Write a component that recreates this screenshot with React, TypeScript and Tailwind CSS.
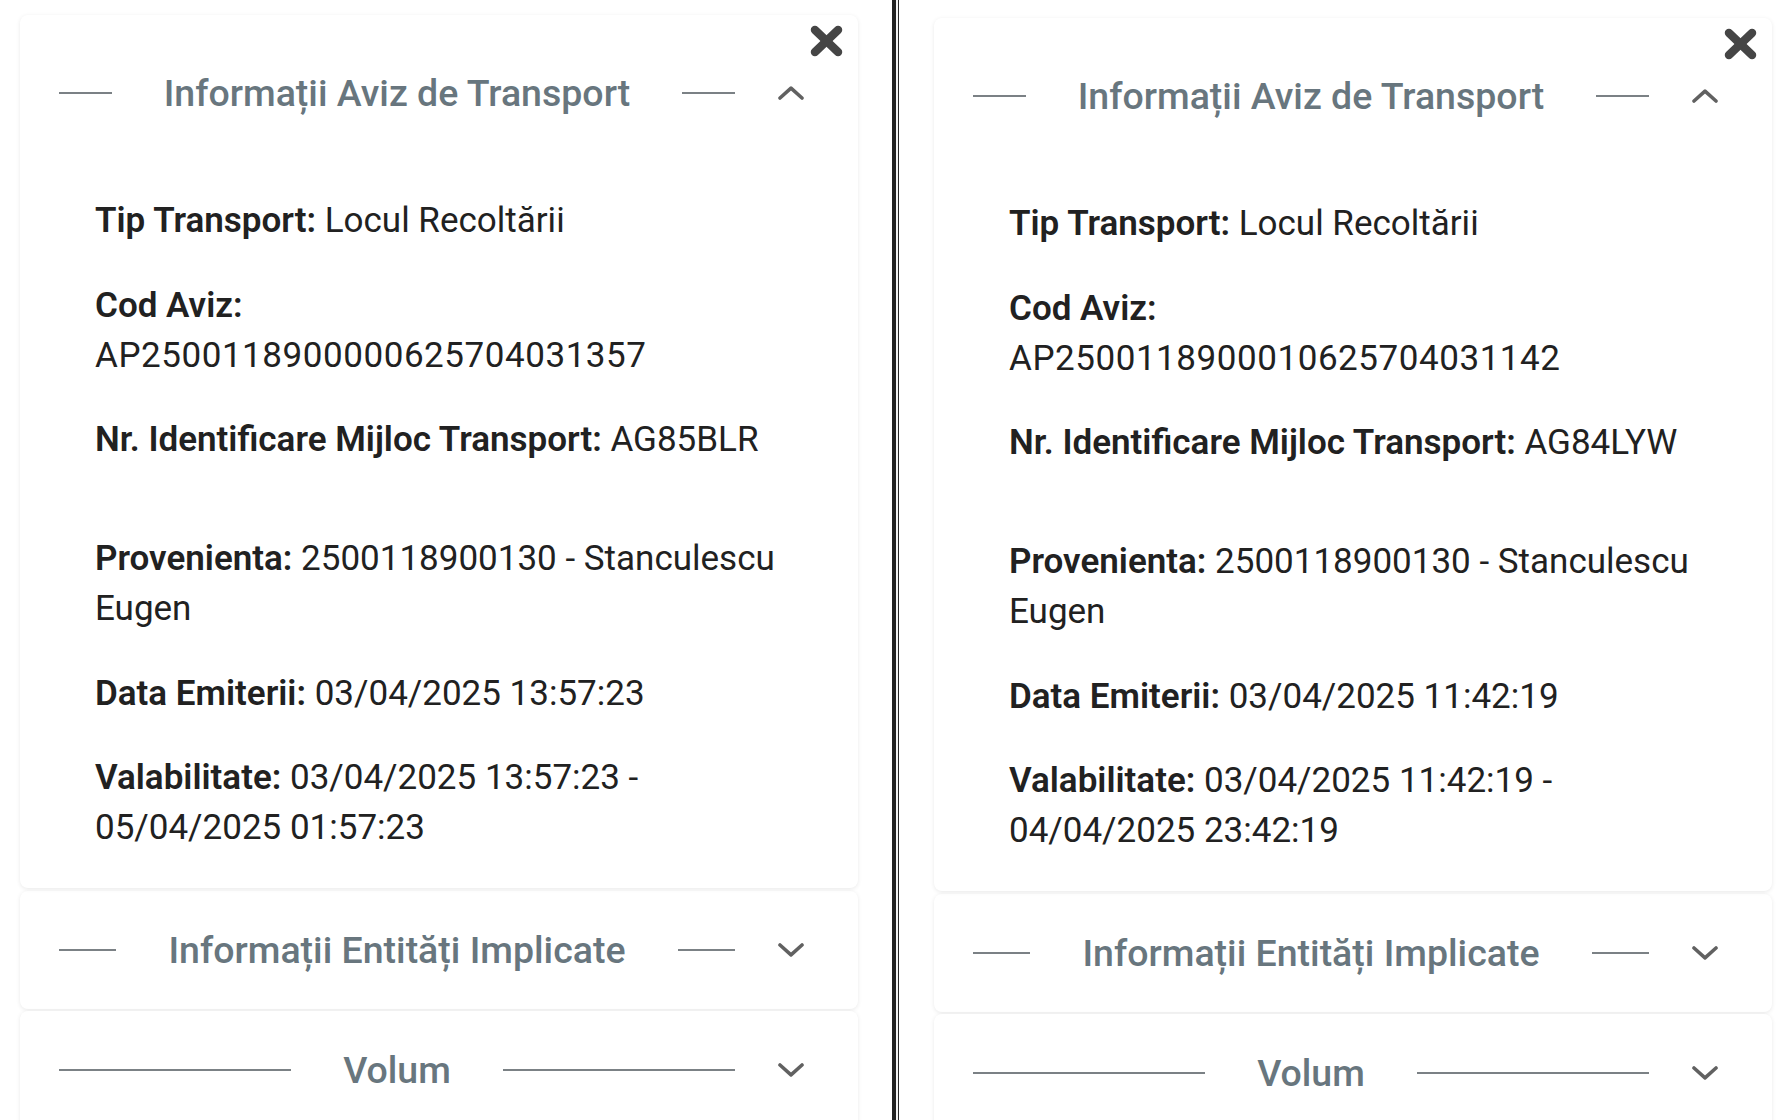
type Row = { label: string; value: string; breakAfterLabel?: boolean; spacerAfter?: boolean }

type PanelData = {
  rows: Row[]
}

const leftData: PanelData = {
  rows: [
    { label: "Tip Transport:", value: "Locul Recoltării" },
    { label: "Cod Aviz:", value: "AP2500118900000625704031357", breakAfterLabel: true },
    { label: "Nr. Identificare Mijloc Transport:", value: "AG85BLR", spacerAfter: true },
    { label: "Provenienta:", value: "2500118900130 - Stanculescu Eugen" },
    { label: "Data Emiterii:", value: "03/04/2025 13:57:23" },
    { label: "Valabilitate:", value: "03/04/2025 13:57:23 - 05/04/2025 01:57:23" },
  ],
}

const rightData: PanelData = {
  rows: [
    { label: "Tip Transport:", value: "Locul Recoltării" },
    { label: "Cod Aviz:", value: "AP2500118900010625704031142", breakAfterLabel: true },
    { label: "Nr. Identificare Mijloc Transport:", value: "AG84LYW", spacerAfter: true },
    { label: "Provenienta:", value: "2500118900130 - Stanculescu Eugen" },
    { label: "Data Emiterii:", value: "03/04/2025 11:42:19" },
    { label: "Valabilitate:", value: "03/04/2025 11:42:19 - 04/04/2025 23:42:19" },
  ],
}

function Chevron({ up }: { up?: boolean }) {
  return (
    <svg width="26" height="14" viewBox="0 0 26 14" className="shrink-0">
      <polyline
        points={up ? "2,12 13,2.2 24,12" : "2,2 13,11.8 24,2"}
        fill="none"
        stroke="#616161"
        strokeWidth="3.6"
        strokeLinecap="round"
        strokeLinejoin="round"
      />
    </svg>
  )
}

function CloseIcon() {
  return (
    <svg width="33" height="32" viewBox="0 0 33 32" className="absolute right-[15px] top-[10px]">
      <g stroke="#454545" strokeWidth="8.5" strokeLinecap="round">
        <line x1="5" y1="5" x2="28" y2="27" />
        <line x1="28" y1="5" x2="5" y2="27" />
      </g>
    </svg>
  )
}

function SectionHeader({ title, open }: { title: string; open?: boolean }) {
  return (
    <div className="flex h-[118px] items-center pl-[39px] pr-[54px]">
      <div className="h-[2px] flex-1 bg-[#7b8185]" />
      <span className="mx-[52px] whitespace-nowrap text-[37.5px] font-medium leading-[60px] text-[#68767e]">{title}</span>
      <div className="h-[2px] flex-1 bg-[#7b8185]" />
      <div className="ml-[43px] flex w-[26px] items-center">
        <Chevron up={open} />
      </div>
    </div>
  )
}

function Panel({ data }: { data: PanelData }) {
  return (
    <div className="flex w-[838px] flex-col">
      {/* Expanded section */}
      <div className="relative rounded-lg bg-white shadow-[0_1px_4px_rgba(0,0,0,0.09)]">
        <CloseIcon />
        <div className="pt-[19px]">
          <SectionHeader title="Informații Aviz de Transport" open />
        </div>
        <div className="flex flex-col gap-[34.5px] pb-[35px] pl-[75px] pr-[50px] pt-[44px] text-[35px] leading-[50px] text-[#212121]">
          {data.rows.map((row) => (
            <div key={row.label} className="contents">
              <p>
                <span className="font-semibold">{row.label}</span>
                {row.breakAfterLabel ? (
                  <>
                    <br />
                    <span className="tracking-[0.55px]">{row.value}</span>
                  </>
                ) : (
                  " " + row.value
                )}
              </p>
              {row.spacerAfter && <div className="h-0" />}
            </div>
          ))}
        </div>
      </div>

      {/* Collapsed sections */}
      <div className="mt-[3px] rounded-lg bg-white shadow-[0_1px_4px_rgba(0,0,0,0.09)]">
        <SectionHeader title="Informații Entități Implicate" />
      </div>
      <div className="mt-[2px] rounded-lg bg-white shadow-[0_1px_4px_rgba(0,0,0,0.09)]">
        <SectionHeader title="Volum" />
      </div>
    </div>
  )
}

export default function App() {
  return (
    <div
      className="flex h-[1120px] w-[1790px] overflow-hidden bg-white"
      style={{ fontFamily: "Roboto, 'Noto Sans', sans-serif" }}
    >
      <div className="w-[892px] shrink-0 pl-[20px] pt-[15px]">
        <Panel data={leftData} />
      </div>
      <div className="w-[4px] shrink-0 bg-[#222]" />
      <div className="w-[2px] shrink-0 bg-[#f4f4f4]" />
      <div className="w-[1px] shrink-0 bg-[#2a2a2a]" />
      <div className="flex-1 pl-[35px] pt-[18px]">
        <Panel data={rightData} />
      </div>
    </div>
  )
}
